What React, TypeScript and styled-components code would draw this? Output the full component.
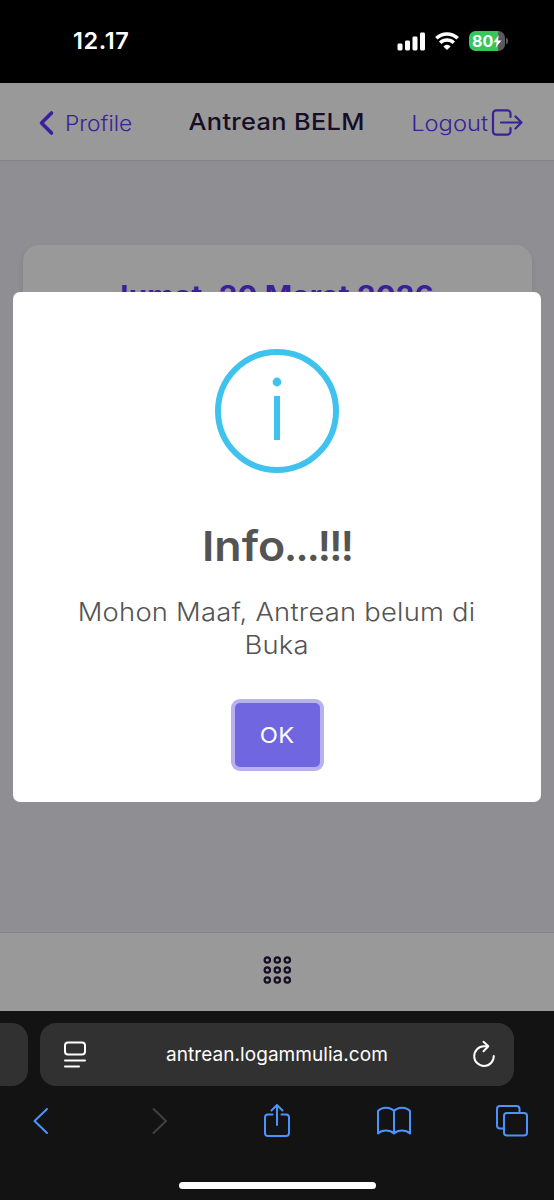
import React from "react";
import styled, { createGlobalStyle } from "styled-components";

const GlobalStyle = createGlobalStyle`
  * { box-sizing: border-box; }
  body { margin: 0; background: #000; font-family: Inter, "Liberation Sans", sans-serif; }
  svg { display: block; flex: none; }
`;

const Wide = styled.span<{ $scale: number; $origin?: string }>`
  display: inline-block;
  transform: scaleX(${(p) => p.$scale});
  transform-origin: ${(p) => p.$origin ?? "center"};
`;

const Phone = styled.main`
  width: 554px;
  height: 1200px;
  display: flex;
  flex-direction: column;
  overflow: hidden;
  background: #131313;
`;

const StatusBar = styled.header`
  flex: none;
  height: 83px;
  padding: 0 46px 1px 73px;
  display: flex;
  align-items: center;
  justify-content: space-between;
  background: #000;
  color: #fff;
`;

const Clock = styled.time`
  font-size: 23.5px;
  font-weight: 600;
  line-height: 28px;
  letter-spacing: 0.6px;
`;

const StatusIcons = styled.div`
  display: flex;
  align-items: center;
  gap: 10px;
`;

const BatteryWrap = styled.div`
  display: flex;
  align-items: center;
  gap: 1px;
`;

const Battery = styled.div`
  width: 36px;
  height: 20px;
  border-radius: 6.5px;
  display: flex;
  align-items: center;
  padding-left: 3px;
  background: linear-gradient(90deg, #34c759 0 28.5px, #5a5a5e 28.5px);
  font-size: 16px;
  font-weight: 700;
  line-height: 20px;
`;

const BatteryTip = styled.div`
  width: 2px;
  height: 6px;
  border-radius: 0 2px 2px 0;
  background: #5a5a5e;
`;

const WebView = styled.section`
  position: relative;
  flex: none;
  height: 928px;
  display: flex;
  flex-direction: column;
  background: #ededf5;
`;

const AppHeader = styled.div`
  flex: none;
  height: 78px;
  padding: 2px 31px 0 38px;
  display: flex;
  align-items: center;
  justify-content: space-between;
  background: #fff;
  border-bottom: 1px solid #dcdce9;
`;

const HeaderLink = styled.a<{ $gap: number }>`
  display: flex;
  align-items: center;
  gap: ${(p) => p.$gap}px;
  color: #6236ff;
  font-size: 21px;
  line-height: 26px;
  font-weight: 350;

  ${Wide} {
    padding-top: 2px;
  }
`;

const AppTitle = styled.h1`
  margin: 0 0 2px 6px;
  color: #27173e;
  font-size: 23.5px;
  font-weight: 450;
  line-height: 28px;
  letter-spacing: 0.3px;
`;

const Content = styled.div`
  flex: 1;
  padding: 84px 22px 0 23px;
`;

const DateCard = styled.div`
  height: 440px;
  padding: 34px 9px 0 0;
  border-radius: 16px;
  background: #fff;
  box-shadow: 0 3px 6px rgba(0, 0, 0, 0.09);
  text-align: center;
`;

const DateTitle = styled.h2`
  margin: 0;
  color: #6236ff;
  font-size: 28px;
  line-height: 34px;
  font-weight: 650;
  letter-spacing: 0.2px;
`;

const BottomMenu = styled.nav`
  flex: none;
  height: 79px;
  padding-bottom: 4px;
  display: flex;
  align-items: center;
  justify-content: center;
  background: #fff;
  border-top: 1px solid #dcdce9;
`;

const Backdrop = styled.div`
  position: absolute;
  inset: 0;
  display: flex;
  align-items: center;
  justify-content: center;
  background: rgba(0, 0, 0, 0.4);
`;

const Dialog = styled.div`
  width: 528px;
  height: 510px;
  padding-top: 57px;
  display: flex;
  flex-direction: column;
  align-items: center;
  border-radius: 7px;
  background: #fff;
  color: #545454;
`;

const DialogTitle = styled.h2`
  margin: 48px 0 0;
  font-size: 41px;
  line-height: 50px;
  font-weight: 600;
`;

const Punctuation = styled.span`
  margin-left: 6px;
  letter-spacing: -1.7px;
`;

const DialogText = styled.p`
  width: 440px;
  margin: 25px 0 0;
  text-align: center;
  font-size: 25px;
  line-height: 32.5px;
  font-weight: 350;
  letter-spacing: 0.2px;
`;

const ConfirmButton = styled.button`
  width: 85px;
  height: 64px;
  margin-top: 42px;
  padding: 0;
  border: 0;
  border-radius: 5px;
  background: #7066e0;
  box-shadow: 0 0 0 4px #b7b2ef;
  color: #fff;
  font: 400 22px/64px Inter, sans-serif;
  letter-spacing: 0.3px;
`;

const BrowserBar = styled.footer`
  flex: 1;
  display: flex;
  flex-direction: column;
  align-items: center;
  background: #131313;
`;

const AddressRow = styled.div`
  width: 100%;
  display: flex;
  gap: 12px;
  padding-top: 12px;
`;

const NeighbourTab = styled.div`
  width: 28px;
  height: 63px;
  border-radius: 0 16px 16px 0;
  background: #313131;
`;

const AddressField = styled.div`
  width: 474px;
  height: 63px;
  padding: 0 17px 0 23px;
  display: flex;
  align-items: center;
  justify-content: space-between;
  border-radius: 16px;
  background: #313131;
  color: #fff;
  font-size: 19px;
  line-height: 24px;
`;

const Url = styled.span`
  margin-right: 4px;
  letter-spacing: 0.05px;
`;

const Toolbar = styled.div`
  width: 100%;
  height: 71px;
  padding: 0 24px 2px 23px;
  display: flex;
  align-items: center;
  justify-content: space-between;
  color: #4b93ff;
`;

const HomeIndicator = styled.div`
  width: 197px;
  height: 7px;
  margin-top: 25px;
  border-radius: 4px;
  background: #fff;
`;

const SignalIcon = () => (
  <svg width="28" height="19" fill="#fff">
    <rect x="0.5" y="11.5" width="5" height="7" rx="1.4" />
    <rect x="8" y="8.5" width="5" height="10" rx="1.4" />
    <rect x="15.5" y="4.5" width="5" height="14" rx="1.4" />
    <rect x="23" y="0.5" width="5" height="18" rx="1.4" />
  </svg>
);

const WifiIcon = () => (
  <svg width="24" height="18" fill="none" stroke="#fff" strokeWidth="3.5">
    <path d="M1.3 6.3a15.3 15.3 0 0 1 21.4 0" />
    <path d="M5.2 10.7a9.7 9.7 0 0 1 13.6 0" />
    <path d="M12 18 8.4 14.4a5 5 0 0 1 7.2 0z" fill="#fff" stroke="none" />
  </svg>
);

const BoltIcon = () => (
  <svg width="9" height="13" viewBox="0 0 9 13" fill="#fff">
    <path d="M5.8.3.4 7.2h3.3L2.7 12.7 8.4 5.6H5z" />
  </svg>
);

const BackIcon = () => (
  <svg width="17" height="26" fill="none" stroke="currentColor" strokeWidth="3.6" strokeLinecap="round" strokeLinejoin="round">
    <path d="M13.5 3 3.5 13l10 10" />
  </svg>
);

const LogoutIcon = () => (
  <svg width="32" height="27" fill="none" stroke="currentColor" strokeWidth="2.2" strokeLinecap="round" strokeLinejoin="round">
    <path d="M19.5 8V4.6a3.2 3.2 0 0 0-3.2-3.2H5.2A3.2 3.2 0 0 0 2 4.6v17.8a3.2 3.2 0 0 0 3.2 3.2h11.1a3.2 3.2 0 0 0 3.2-3.2V19" />
    <path d="M10 13.5h20M24.5 7.5l6 6-6 6" />
  </svg>
);

const AppsIcon = () => (
  <svg width="30" height="30" fill="none" stroke="#27173e" strokeWidth="2.2">
    {[5, 15, 25].map((y) => [5.3, 15.3, 25.3].map((x) => <circle key={`${x}-${y}`} cx={x} cy={y} r="2.7" />))}
  </svg>
);

const InfoIcon = () => (
  <svg width="124" height="124" fill="none" stroke="#3fc3ee" strokeWidth="6">
    <circle cx="62" cy="62" r="59" />
    <circle cx="62" cy="33" r="4.4" fill="#3fc3ee" stroke="none" />
    <path d="M62 47v44" />
  </svg>
);

const PageMenuIcon = () => (
  <svg width="24" height="28" fill="none" stroke="#fff" strokeWidth="2" strokeLinecap="round">
    <rect x="2" y="1.5" width="20" height="12" rx="3" />
    <path d="M2 19.5h20M2 25.5h14" />
  </svg>
);

const ReloadIcon = () => (
  <svg width="26" height="30" fill="none" stroke="#fff" strokeWidth="2" strokeLinecap="round" strokeLinejoin="round">
    <path d="M22.8 16A9.8 9.8 0 1 1 13 6.3h4" />
    <path d="M12.5 1.8 17.3 6.3l-4.8 5" />
  </svg>
);

const ToolIcon = ({ children, color = "currentColor" }: { children: React.ReactNode; color?: string }) => (
  <svg width="36" height="36" viewBox="0 0 36 36" fill="none" stroke={color} strokeWidth="2" strokeLinecap="round" strokeLinejoin="round">
    {children}
  </svg>
);

export default function App() {
  return (
    <Phone>
      <GlobalStyle />
      <StatusBar>
        <Clock>12.17</Clock>
        <StatusIcons>
          <SignalIcon />
          <WifiIcon />
          <BatteryWrap>
            <Battery>
              80
              <BoltIcon />
            </Battery>
            <BatteryTip />
          </BatteryWrap>
        </StatusIcons>
      </StatusBar>

      <WebView>
        <AppHeader>
          <HeaderLink $gap={10}>
            <BackIcon />
            <Wide $scale={1.085} $origin="left">Profile</Wide>
          </HeaderLink>
          <AppTitle>
            <Wide $scale={1.08}>Antrean BELM</Wide>
          </AppTitle>
          <HeaderLink $gap={3}>
            <Wide $scale={1.13} $origin="right">Logout</Wide>
            <LogoutIcon />
          </HeaderLink>
        </AppHeader>
        <Content>
          <DateCard>
            <DateTitle>
              <Wide $scale={1.05}>Jumat, 20 Maret 2026</Wide>
            </DateTitle>
          </DateCard>
        </Content>
        <BottomMenu>
          <AppsIcon />
        </BottomMenu>
        <Backdrop>
          <Dialog role="dialog">
            <InfoIcon />
            <DialogTitle>
              <Wide $scale={1.09} $origin="left">Info</Wide>
              <Punctuation>...!!!</Punctuation>
            </DialogTitle>
            <DialogText>
              <Wide $scale={1.095}>
                Mohon Maaf, Antrean belum di
                <br />
                Buka
              </Wide>
            </DialogText>
            <ConfirmButton>
              <Wide $scale={1.08}>OK</Wide>
            </ConfirmButton>
          </Dialog>
        </Backdrop>
      </WebView>

      <BrowserBar>
        <AddressRow>
          <NeighbourTab />
          <AddressField>
            <PageMenuIcon />
            <Url>antrean.logammulia.com</Url>
            <ReloadIcon />
          </AddressField>
        </AddressRow>
        <Toolbar>
          <ToolIcon>
            <path d="M24 6 11.5 18 24 30" />
          </ToolIcon>
          <ToolIcon color="#414141">
            <path d="M12.5 6 25 18 12.5 30" />
          </ToolIcon>
          <ToolIcon>
            <path d="M13.5 11.5H9a3 3 0 0 0-3 3V30a3 3 0 0 0 3 3h18a3 3 0 0 0 3-3V14.500a3 3 0 0 0-3-3h-4.500" />
            <path d="M18 22V2M12.5 7.5 18 2l5.5 5.5" />
          </ToolIcon>
          <ToolIcon>
            <path d="M18 8C14 3.5 6 3.5 2 8V30.5C6 26.5 14 26.5 18 30.5C22 26.5 30 26.5 34 30.5V8C30 3.5 22 3.5 18 8V30.5" />
          </ToolIcon>
          <ToolIcon>
            <path d="M9.5 25.5H6a3 3 0 0 1-3-3V6a3 3 0 0 1 3-3h16.500a3 3 0 0 1 3 3v3.500" />
            <rect x="10" y="10" width="23" height="22.5" rx="3" />
          </ToolIcon>
        </Toolbar>
        <HomeIndicator />
      </BrowserBar>
    </Phone>
  );
}
